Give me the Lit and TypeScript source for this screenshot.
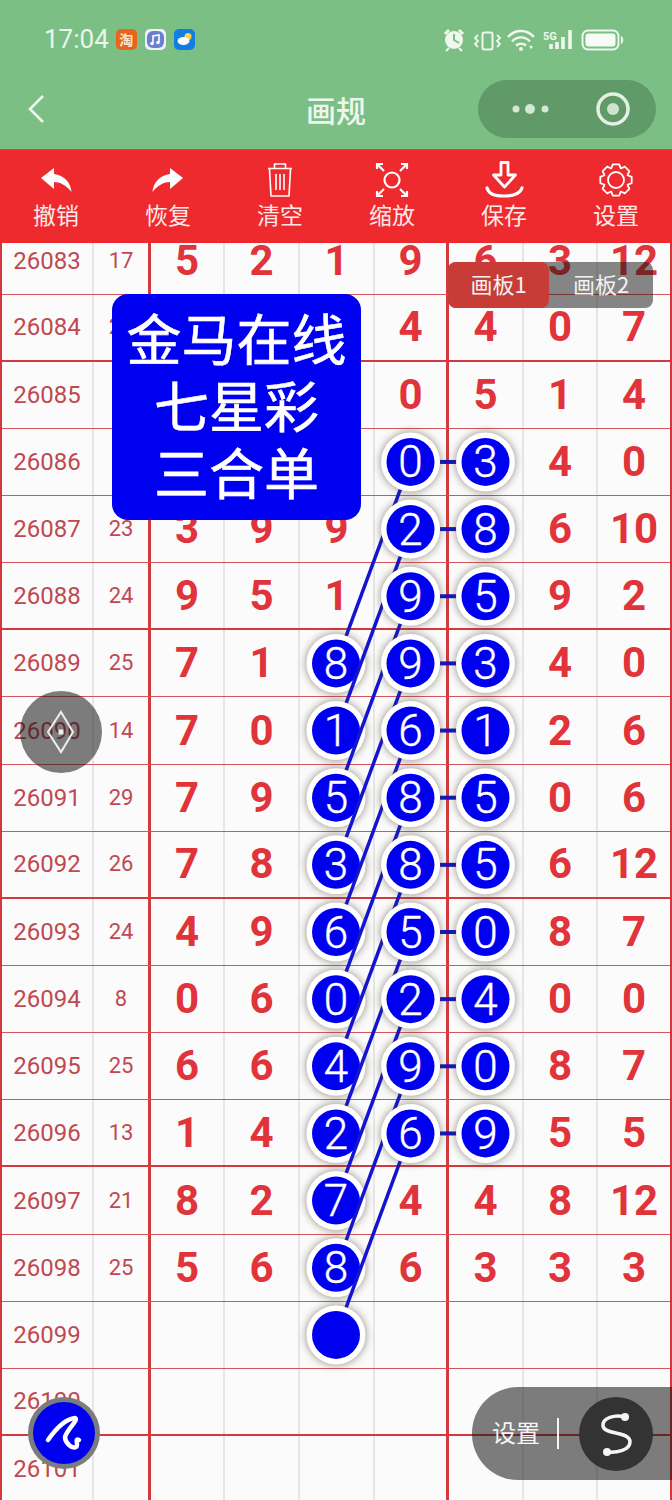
import { LitElement, html, css, svg } from "lit";
import { customElement } from "lit/decorators.js";

const ROWS: [number, string, string[]][] = [
  [26083, "17", ["5", "2", "1", "9", "6", "3", "12"]],
  [26084, "22", ["", "", "", "4", "4", "0", "7"]],
  [26085, "", ["", "", "", "0", "5", "1", "4"]],
  [26086, "", ["", "", "", "", "", "4", "0"]],
  [26087, "23", ["3", "9", "9", "", "", "6", "10"]],
  [26088, "24", ["9", "5", "1", "", "", "9", "2"]],
  [26089, "25", ["7", "1", "", "", "", "4", "0"]],
  [26090, "14", ["7", "0", "", "", "", "2", "6"]],
  [26091, "29", ["7", "9", "", "", "", "0", "6"]],
  [26092, "26", ["7", "8", "", "", "", "6", "12"]],
  [26093, "24", ["4", "9", "", "", "", "8", "7"]],
  [26094, "8", ["0", "6", "", "", "", "0", "0"]],
  [26095, "25", ["6", "6", "", "", "", "8", "7"]],
  [26096, "13", ["1", "4", "", "", "", "5", "5"]],
  [26097, "21", ["8", "2", "", "4", "4", "8", "12"]],
  [26098, "25", ["5", "6", "", "6", "3", "3", "3"]],
  [26099, "", ["", "", "", "", "", "", ""]],
  [26100, "", ["", "", "", "", "", "", ""]],
  [26101, "", ["", "", "", "", "", "", ""]],
];

const C3 = ["8", "1", "5", "3", "6", "0", "4", "2", "7", "8", ""];
const C4 = ["0", "2", "9", "9", "6", "8", "8", "5", "2", "9", "6"];
const C5 = ["3", "8", "5", "3", "1", "5", "5", "0", "4", "0", "9"];
const ry = (num: number) => 260.5 + 67.15 * (num - 26083);

function ball(x: number, y: number, d: string) {
  return svg`<g>
    <circle class="ring" cx=${x} cy=${y} r="29.5"></circle>
    <circle class="core" cx=${x} cy=${y} r="24"></circle>
    <text class="bn" x=${x} y=${y + 15.5} text-anchor="middle">${d}</text>
  </g>`;
}

function gearPath() {
  let d = "";
  const n = 8;
  for (let i = 0; i < n; i++) {
    const a = (i * Math.PI * 2) / n;
    const pts = [
      [12.5, a - 0.39],
      [16, a - 0.2],
      [16, a + 0.2],
      [12.5, a + 0.39],
    ];
    for (const [r, t] of pts) {
      d += `${d ? "L" : "M"}${(20 + r * Math.cos(t)).toFixed(2)} ${(20 + r * Math.sin(t)).toFixed(2)} `;
    }
  }
  return d + "Z";
}

const ICONS = {
  undo: svg`<path fill="#fff" d="M5 18 L18 8 V14 C28 15 35 23 35.5 32 C30 25 24 22 18 22 V29 Z"/>`,
  redo: svg`<path fill="#fff" d="M35 18 L22 8 V14 C12 15 5 23 4.5 32 C10 25 16 22 22 22 V29 Z"/>`,
  trash: svg`<g fill="none" stroke="#fff" stroke-width="1.6" stroke-linejoin="round">
    <path d="M8 8.500 H32 M14.500 8 V4 H25.500 V8"/>
    <path d="M9.500 9 L11 36 H29 L30.500 9"/>
    <path d="M16 14 V30 M20 14 V30 M24 14 V30"/></g>`,
  zoom: svg`<g fill="none" stroke="#fff" stroke-width="2.2">
    <circle cx="20" cy="20" r="7.500"/>
    <path d="M5 9 V4 H11 M5 4 L12 11 M35 9 V4 H29 M35 4 L28 11 M5 31 V36 H11 M5 36 L12 29 M35 31 V36 H29 M35 36 L28 29"/></g>`,
  save: svg`<g fill="none" stroke="#fff" stroke-width="2.8" stroke-linejoin="round" stroke-linecap="round">
    <path d="M17 2.500 H24 V15 H31.500 L20.500 27 L9.500 15 H17 Z"/>
    <path d="M3 28 C5 34 10 36 20 36 C30 36 36 34 38 28" stroke-width="3.200"/></g>`,
  gear: svg`<g fill="none" stroke="#fff" stroke-width="1.800" stroke-linejoin="round">
    <path d=${gearPath()}/><circle cx="20" cy="20" r="8"/></g>`,
};

const TOOLS: [string, keyof typeof ICONS][] = [
  ["撤销", "undo"],
  ["恢复", "redo"],
  ["清空", "trash"],
  ["缩放", "zoom"],
  ["保存", "save"],
  ["设置", "gear"],
];

@customElement("app-root")
export class AppRoot extends LitElement {
  static styles = css`
    :host { display: block; width: 672px; height: 1500px; overflow: hidden; position: relative; background: #fbfbfb;
      font-family: "Noto Sans CJK SC", "Noto Sans", sans-serif; }
    .status { height: 75px; background: #7bbf85; display: flex; align-items: flex-start; justify-content: space-between;
      padding: 24px 47px 0 44px; box-sizing: border-box; color: #eaf6eb; }
    .sl, .sr { display: flex; align-items: center; height: 30px; }
    .time { font: 400 26px/30px Roboto, sans-serif; margin-right: 7px; }
    .app { width: 21px; height: 21px; border-radius: 5px; margin-right: 8px; display: flex; align-items: center; justify-content: center; overflow: hidden; }
    .tao { background: #e8641b; color: #fde6c8; font-size: 14px; line-height: 21px; font-weight: 700; }
    .mus { background: #eef1fa; }
    .wea { background: #0f7fe3; }
    .sr svg { display: block; }
    .nav { height: 74px; background: #7bbf85; display: grid; grid-template-columns: 1fr auto 1fr; align-items: center; align-content: start; padding-top: 5px; box-sizing: border-box; }
    .back { margin-left: 26px; display: block; }
    .title { color: #eef7ee; font-size: 30px; font-weight: 500; line-height: 56px; }
    .pill { justify-self: end; margin-right: 16px; width: 178px; height: 58px; border-radius: 29px; background: #5f9a68; display: block; }
    .tools { height: 94px; background: #ee2a2e; border-top: 1px solid #b0564a; box-sizing: border-box; padding-top: 10px; display: flex; }
    .tool { width: 112px; display: flex; flex-direction: column; align-items: center; }
    .tool svg { display: block; }
    .tool span { color: #fbe9e9; font-size: 23px; line-height: 32px; margin-top: -2px; }
    .board { height: 1257px; overflow: hidden; }
    .rows { margin-top: -15.5px; border-left: 2px solid #d0383c; border-right: 2px solid #d0383c; box-sizing: border-box; width: 672px; }
    .row { display: grid; grid-template-columns: 92px 57px 74px 75px 75px 74px 75px 74px 1fr; height: 67.15px; box-sizing: border-box;
      border-bottom: 1px solid #d4565c; }
    .row.thick { border-bottom: 2px solid #d23a3e; }
    .c { display: flex; align-items: center; justify-content: center; border-right: 2px solid #e6e6e6; box-sizing: border-box; color: #e0333a;
      font: 700 42px/1 Roboto, sans-serif; }
    .c:last-child { border-right: 0; }
    .c.num { font-weight: 400; font-size: 24px; color: #c04850; }
    .c.cnt { font-weight: 400; font-size: 22px; color: #c04850; }
    .c.bar { border-right: 3px solid #d23a3e; }
    .overlay { position: absolute; left: 0; top: 0; pointer-events: none; }
    .ring { fill: #fff; filter: drop-shadow(0 0 4px rgba(70,60,40,.6)); }
    .core { fill: #0000f0; }
    .bn { fill: #fff; stroke: #fff; stroke-width: .4px; font: 300 44px Roboto, sans-serif; }
    .link { stroke: #1414d0; stroke-width: 3.5; }
    .dash { stroke: #1414c0; stroke-width: 4; }
    .card { position: absolute; left: 112px; top: 294px; width: 249px; height: 226px; border-radius: 16px; background: #0000f0; color: #fff;
      font-size: 55px; line-height: 67px; -webkit-text-stroke: .6px #fff; text-align: center; padding-top: 9px; box-sizing: border-box; }
    .tabs { position: absolute; left: 448px; top: 262px; width: 205px; height: 46px; display: flex; border-radius: 8px; background: rgba(25,25,25,.52); color: #f2f2f2; font-size: 22px; line-height: 42px; }
    .tabs div { flex: 1; text-align: center; }
    .tabs .on { flex: 0 0 101px; background: #c83c38; border-radius: 8px; }
    .float { position: absolute; display: block; }
    .joy { left: 20px; top: 691px; width: 82px; height: 82px; }
    .pen { left: 27px; top: 1396px; width: 74px; height: 74px; }
    .dock { position: absolute; left: 472px; top: 1387px; width: 200px; height: 93px; border-radius: 46px 0 0 46px; background: rgba(20,20,20,.55);
      display: flex; align-items: center; color: #f5f5f5; font-size: 24px; padding-left: 20px; box-sizing: border-box; }
    .dock span { padding-bottom: 4px; }
    .sep { width: 2px; height: 31px; background: #f5f5f5; margin-left: 17px; margin-right: 20px; }
    .dock svg { display: block; }
  `;

  render() {
    const thick = new Set([26084, 26088, 26092, 26096, 26100]);
    return html`
      <div class="status">
        <div class="sl">
          <span class="time">17:04</span>
          <span class="app tao">淘</span>
          <span class="app mus"><svg width="21" height="21" viewBox="0 0 21 21"><rect x="2" y="2" width="17" height="17" rx="6" fill="#6a7fd0"/><path d="M8 14 V7 L14 6 V13" fill="none" stroke="#fff" stroke-width="1.600"/><circle cx="7" cy="14.500" r="1.800" fill="#fff"/><circle cx="13" cy="13.500" r="1.800" fill="#fff"/></svg></span>
          <span class="app wea"><svg width="21" height="21" viewBox="0 0 21 21"><circle cx="14" cy="7.500" r="3.500" fill="#ffd54a"/><ellipse cx="9.500" cy="12" rx="6" ry="4" fill="#fff"/></svg></span>
        </div>
        <div class="sr">
          <svg width="182" height="30" viewBox="443 22 182 30">
            <circle cx="454" cy="38" r="9" fill="#eef8ee"/>
            <path d="M454 32 V38 L459 41" fill="none" stroke="#7bbf85" stroke-width="2"/>
            <path d="M445 32 L449 28 M463 32 L459 28" stroke="#eef8ee" stroke-width="3"/>
            <path d="M449 46 L446 49 M459 46 L462 49" stroke="#eef8ee" stroke-width="2"/>
            <rect x="482.500" y="30.500" width="10" height="17" rx="2" fill="none" stroke="#eef8ee" stroke-width="2"/>
            <path d="M478 33 L475 36 L478 39 L475 42 L478 45 M497 33 L500 36 L497 39 L500 42 L497 45" fill="none" stroke="#eef8ee" stroke-width="1.800"/>
            <path d="M508 35 C515 27 527 27 534 35 M512 39.500 C517 34 525 34 530 39.500 M516 43.500 C519 41 523 41 526 43.500" fill="none" stroke="#eef8ee" stroke-width="2.400"/>
            <circle cx="521" cy="47" r="2" fill="#eef8ee"/>
            <circle cx="531" cy="45" r="1.500" fill="#eef8ee"/>
            <text x="543" y="38" font-family="Roboto, sans-serif" font-size="11" font-weight="700" fill="#eef8ee">5G</text>
            <path d="M551 47 V42 M557 47 V40 M563 47 V35 M570 47 V28" stroke="#eef8ee" stroke-width="3.600"/>
            <rect x="582.500" y="28.500" width="36" height="19" rx="5.500" fill="none" stroke="#eef8ee" stroke-width="2"/>
            <rect x="585.500" y="31.500" width="30" height="13" rx="3" fill="#f6fbf6"/>
            <path d="M621 34 C624 35 624 41 621 42 Z" fill="#eef8ee"/>
          </svg>
        </div>
      </div>
      <div class="nav">
        <svg class="back" width="20" height="32" viewBox="0 0 20 32"><path d="M17 3 L4 16 L17 29" fill="none" stroke="#eef7ee" stroke-width="2.600"/></svg>
        <div class="title">画规</div>
        <svg class="pill" viewBox="0 0 178 58">
          <circle cx="38" cy="29" r="3.500" fill="#d5e8d3"/><circle cx="52" cy="29" r="5" fill="#d5e8d3"/><circle cx="67" cy="29" r="3.500" fill="#d5e8d3"/>
          <circle cx="135" cy="29" r="15" fill="none" stroke="#e4f1e2" stroke-width="3.500"/><circle cx="135" cy="29" r="6" fill="#cfe4cc"/>
        </svg>
      </div>
      <div class="tools">
        ${TOOLS.map(([t, k]) => html`<div class="tool"><svg width="40" height="40" viewBox="0 0 40 40">${ICONS[k]}</svg><span>${t}</span></div>`)}
      </div>
      <div class="board">
        <div class="rows">
          ${ROWS.map(([n, cnt, vals]) => html`<div class="row ${thick.has(n) ? "thick" : ""}">
            <div class="c num">${n}</div>
            <div class="c cnt bar">${cnt}</div>
            ${vals.map((v, i) => html`<div class="c ${i === 3 ? "bar" : ""}">${v}</div>`)}
          </div>`)}
        </div>
      </div>
      <svg class="overlay" width="672" height="1500" viewBox="0 0 672 1500">
        ${C3.map((d, i) => svg`
          <line class="link" x1="410.500" y1=${ry(26086 + i)} x2="336" y2=${ry(26089 + i)}></line>
          ${ball(336, ry(26089 + i), d)}`)}
        ${C4.map((_, i) => svg`<line class="dash" x1="440" x2="457" y1=${ry(26086 + i)} y2=${ry(26086 + i)}></line>`)}
        ${C4.map((d, i) => ball(410.5, ry(26086 + i), d))}
        ${C5.map((d, i) => ball(485.5, ry(26086 + i), d))}
      </svg>
      <div class="card">金马在线<br />七星彩<br />三合单</div>
      <div class="tabs"><div class="on">画板1</div><div>画板2</div></div>
      <svg class="float joy" viewBox="0 0 82 82">
        <circle cx="41" cy="41" r="41" fill="rgba(20,20,20,.55)"/>
        <path d="M41 21 L53 41 L41 61 L28 41 Z" fill="none" stroke="#eee" stroke-width="2"/>
        <rect x="38.500" y="38.500" width="5" height="5" fill="#eee"/>
      </svg>
      <svg class="float pen" viewBox="0 0 74 74">
        <circle cx="37" cy="37" r="36" fill="#7c7c7c"/>
        <circle cx="37" cy="37" r="31" fill="#0000f0"/>
        <path d="M21 44 C28 34 38 23 48 22 C52 24 41 32 38 41 C38 47 45 53 49 51 C52 49 47 42 52 44" fill="none" stroke="#fff" stroke-width="4.500" stroke-linecap="round" stroke-linejoin="round"/>
      </svg>
      <div class="dock">
        <span>设置</span><i class="sep"></i>
        <svg width="74" height="74" viewBox="0 0 74 74">
          <circle cx="37" cy="37" r="37" fill="#333"/>
          <path d="M46 20 C36 17 23 21 24 29 C25 38 51 34 51 45 C51 53 38 56 28 55" fill="none" stroke="#f5f5f5" stroke-width="3.500" stroke-linecap="round"/>
          <circle cx="46" cy="20" r="4" fill="#f5f5f5"/><circle cx="28" cy="55" r="4" fill="#f5f5f5"/>
        </svg>
      </div>
    `;
  }
}
